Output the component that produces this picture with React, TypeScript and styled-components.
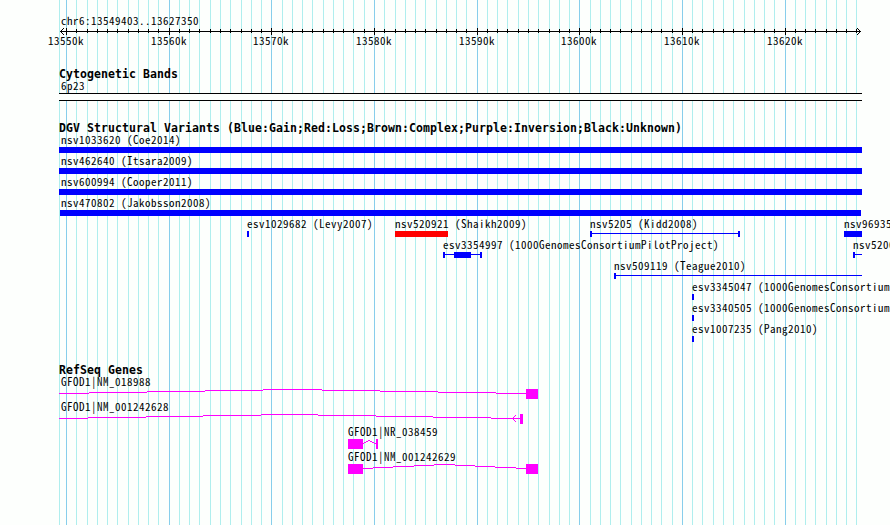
import React from "react"
import styled, { createGlobalStyle } from "styled-components"

const BLUE = "#0000ff"
const RED = "#ff0000"
const MAGENTA = "#ff00ff"

const TRACK_START = 59
const FIRST_MAJOR = 66.5
const MINOR_STEP = 10.266

const GlobalStyle = createGlobalStyle`
  body {
    margin: 0;
    background-color: #fdfffd;
    overflow: hidden;
  }
`

const Browser = styled.main`
  position: relative;
  width: 890px;
  height: 525px;
  overflow: hidden;
  color: #000;
  font-family: "Noto Sans CJK JP", "DejaVu Sans Mono", monospace;
  font-feature-settings: "hwid" 1;
  font-size: 11px;
  letter-spacing: 0.5px;
  white-space: pre;
`

const Drawing = styled.svg`
  display: block;
  overflow: visible;
  shape-rendering: crispEdges;
`

const Grid = styled(Drawing)`
  position: absolute;
  top: 0;
  left: 0;
`

const Tracks = styled.div`
  position: relative;
  display: flex;
  flex-direction: column;
  padding-top: 15px;
`

const Label = styled.div<{ $indent?: number }>`
  height: 13px;
  line-height: 11px;
  padding-left: ${({ $indent }) => $indent ?? 0}px;
`

const Scale = styled.div`
  display: grid;
  height: 14px;

  > * {
    grid-area: 1 / 1;
  }
`

const ScaleLabel = styled.span<{ $x: number }>`
  width: 36px;
  height: 13px;
  line-height: 11px;
  margin-left: ${({ $x }) => $x}px;
`

const Track = styled.section<{ $space: number }>`
  margin-top: ${({ $space }) => $space}px;
`

const Heading = styled.h2`
  margin: 0;
  padding-left: 59px;
  height: 12px;
  line-height: 12px;
  font-family: "DejaVu Sans Mono", monospace;
  font-size: 11.5px;
  font-weight: bold;
  letter-spacing: 0.077px;
`

const Band = styled.div`
  box-sizing: border-box;
  width: 803px;
  height: 8px;
  margin-left: 59px;
  background-color: #fdfffd;
  border: solid #000;
  border-width: 1px 0;
`

const Lane = styled.div<{ $height: number }>`
  display: grid;
  height: ${({ $height }) => $height}px;

  > * {
    grid-area: 1 / 1;
  }
`

const FeatureBox = styled.div<{ $x: number }>`
  width: max-content;
  margin-left: ${({ $x }) => $x}px;
`

type Variant = {
  name: string
  start: number
  end: number
  color?: string
  // thin features have a line with end ticks and an optional thick block
  thin?: boolean
  open?: boolean
  block?: [number, number]
}

type Gene = {
  name: string
  start: number
  exons: [number, number][]
  // x of every step of the intron line, climbing to the middle step
  steps: number[]
  arrow?: number
}

const variantLanes: Variant[][] = [
  [{ name: "nsv1033620 (Coe2014)", start: 59, end: 862 }],
  [{ name: "nsv462640 (Itsara2009)", start: 59, end: 862 }],
  [{ name: "nsv600994 (Cooper2011)", start: 59, end: 862 }],
  [{ name: "nsv470802 (Jakobsson2008)", start: 60, end: 861 }],
  [
    { name: "esv1029682 (Levy2007)", start: 247, end: 249 },
    { name: "nsv520921 (Shaikh2009)", start: 395, end: 448, color: RED },
    { name: "nsv5205 (Kidd2008)", start: 590, end: 740, thin: true },
    { name: "nsv969355", start: 844, end: 862 },
  ],
  [
    {
      name: "esv3354997 (1000GenomesConsortiumPilotProject)",
      start: 443,
      end: 482,
      thin: true,
      block: [454, 471],
    },
    { name: "nsv5200", start: 853, end: 862, thin: true, open: true },
  ],
  [{ name: "nsv509119 (Teague2010)", start: 614, end: 862, thin: true, open: true }],
  [{ name: "esv3345047 (1000GenomesConsortiumPilotProject)", start: 692, end: 694 }],
  [{ name: "esv3340505 (1000GenomesConsortiumPilotProject)", start: 692, end: 694 }],
  [{ name: "esv1007235 (Pang2010)", start: 692, end: 694 }],
]

const genes: Gene[] = [
  {
    name: "GFOD1|NM_018988",
    start: 59,
    exons: [[526, 538]],
    steps: [59, 89, 147, 205, 263, 322, 380, 438, 496, 526],
  },
  {
    name: "GFOD1|NM_001242628",
    start: 59,
    exons: [[520, 523]],
    steps: [59, 88, 146, 203, 261, 318, 376, 433, 491, 520],
    arrow: 512,
  },
  {
    name: "GFOD1|NR_038459",
    start: 348,
    exons: [
      [348, 363],
      [376, 378],
    ],
    steps: [363, 364, 366, 368, 370, 372, 374, 376],
  },
  {
    name: "GFOD1|NM_001242629",
    start: 348,
    exons: [
      [348, 363],
      [526, 538],
    ],
    steps: [363, 373, 393, 414, 434, 455, 475, 495, 516, 526],
  },
]

const gridX = (i: number) => Math.floor(FIRST_MAJOR + i * MINOR_STEP)
const ticks = Array.from({ length: 78 }, (_, i) => i)

function GridLines() {
  return (
    <Grid width={890} height={525}>
      <rect x={TRACK_START} width={1} height={525} fill="#afeeee" />
      {ticks.map((i) => (
        <rect key={i} x={gridX(i)} width={1} height={525} fill={i % 10 ? "#afeeee" : "#87ceeb"} />
      ))}
    </Grid>
  )
}

function Axis() {
  return (
    <Drawing width={890} height={7}>
      <rect x={60} y={3} width={801} height={1} />
      {ticks.map((i) =>
        i % 10 ? (
          <rect key={i} x={gridX(i)} y={1} width={1} height={4} />
        ) : (
          <rect key={i} x={gridX(i)} y={0} width={1} height={7} />
        )
      )}
      {[1, 2, 3].map((d) => (
        <g key={d}>
          <rect x={60 + d} y={3 - d} width={1} height={1} />
          <rect x={60 + d} y={3 + d} width={1} height={1} />
          <rect x={860 - d} y={3 - d} width={1} height={1} />
          <rect x={860 - d} y={3 + d} width={1} height={1} />
        </g>
      ))}
    </Drawing>
  )
}

function VariantFeature({ name, start, end, color = BLUE, thin, open, block }: Variant) {
  const width = end - start
  return (
    <FeatureBox $x={start}>
      <Label $indent={start < 61 ? 61 - start : 0}>{name}</Label>
      <Drawing width={width} height={6} fill={color}>
        {thin ? (
          <>
            <rect y={2} width={width} height={1} />
            <rect width={2} height={6} />
            {!open && <rect x={width - 2} width={2} height={6} />}
            {block && <rect x={block[0] - start} width={block[1] - block[0]} height={6} />}
          </>
        ) : (
          <rect width={width} height={6} />
        )}
      </Drawing>
    </FeatureBox>
  )
}

function GeneFeature({ name, start, exons, steps, arrow }: Gene) {
  const last = steps.length - 2
  return (
    <FeatureBox $x={start}>
      <Label $indent={start < 61 ? 61 - start : 0}>{name}</Label>
      <Drawing width={exons[exons.length - 1][1] - start} height={10} fill={MAGENTA}>
        {steps.slice(0, -1).map((x, i) => (
          <rect
            key={x}
            x={x - start}
            y={4 - Math.min(i, last - i)}
            width={steps[i + 1] - x}
            height={1}
          />
        ))}
        {exons.map(([from, to]) => (
          <rect key={from} x={from - start} width={to - from} height={10} />
        ))}
        {arrow &&
          [1, 2, 3].map((d) => (
            <g key={d}>
              <rect x={arrow - start + d} y={4 - d} width={1} height={1} />
              <rect x={arrow - start + d} y={4 + d} width={1} height={1} />
            </g>
          ))}
      </Drawing>
    </FeatureBox>
  )
}

export default function App() {
  return (
    <>
      <GlobalStyle />
      <Browser>
        <GridLines />
        <Tracks>
          <Label $indent={61}>chr6:13549403..13627350</Label>
          <Axis />
          <Scale>
            {ticks
              .filter((i) => i % 10 === 0)
              .map((i) => (
                <ScaleLabel key={i} $x={gridX(i) - 18}>
                  {13550 + i}k
                </ScaleLabel>
              ))}
          </Scale>
          <Track $space={19}>
            <Heading>Cytogenetic Bands</Heading>
            <Label $indent={61}>6p23</Label>
            <Band />
          </Track>
          <Track $space={21}>
            <Heading>
              DGV Structural Variants (Blue:Gain;Red:Loss;Brown:Complex;Purple:Inversion;Black:Unknown)
            </Heading>
            {variantLanes.map((lane) => (
              <Lane key={lane[0].name} $height={21}>
                {lane.map((variant) => (
                  <VariantFeature key={variant.name} {...variant} />
                ))}
              </Lane>
            ))}
          </Track>
          <Track $space={20}>
            <Heading>RefSeq Genes</Heading>
            {genes.map((gene) => (
              <Lane key={gene.name} $height={25}>
                <GeneFeature {...gene} />
              </Lane>
            ))}
          </Track>
        </Tracks>
      </Browser>
    </>
  )
}
